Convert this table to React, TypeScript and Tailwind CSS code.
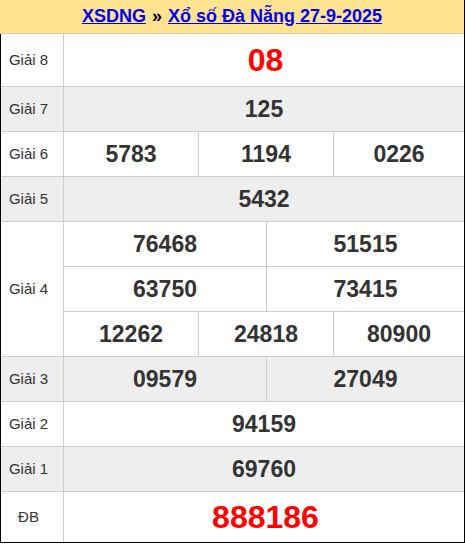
import React from "react"

type Row = {
  label: string
  lines: string[][]
  gray?: boolean
  big?: boolean
  h: string
}

const rows: Row[] = [
  { label: "Giải 8", lines: [["08"]], big: true, h: "h-[52px]" },
  { label: "Giải 7", lines: [["125"]], gray: true, h: "h-[44px]" },
  { label: "Giải 6", lines: [["5783", "1194", "0226"]], h: "h-[44px]" },
  { label: "Giải 5", lines: [["5432"]], gray: true, h: "h-[44px]" },
  {
    label: "Giải 4",
    lines: [
      ["76468", "51515"],
      ["63750", "73415"],
      ["12262", "24818", "80900"],
    ],
    h: "h-[44px]",
  },
  { label: "Giải 3", lines: [["09579", "27049"]], gray: true, h: "h-[44px]" },
  { label: "Giải 2", lines: [["94159"]], h: "h-[44px]" },
  { label: "Giải 1", lines: [["69760"]], gray: true, h: "h-[44px]" },
  { label: "ĐB", lines: [["888186"]], big: true, h: "h-[50px]" },
]

function Line({ nums, big, h, last }: { nums: string[]; big?: boolean; h: string; last: boolean }) {
  const cols =
    nums.length === 3
      ? "grid-cols-[135px_135px_1fr]"
      : nums.length === 2
        ? "grid-cols-[203px_1fr]"
        : "grid-cols-1"
  return (
    <div className={`grid ${cols} ${last ? h : "h-[45px] border-b border-[#cccccc]"}`}>
      {nums.map((n, i) => (
        <div
          key={i}
          className={`flex items-center justify-center font-bold ${
            big ? "text-[32px] text-[#ff0000] pl-[3px]" : "text-[23px] text-[#333333]"
          } ${i < nums.length - 1 ? "border-r border-[#cccccc]" : ""}`}
        >
          {n}
        </div>
      ))}
    </div>
  )
}

export default function App() {
  return (
    <div className="w-[465px] bg-white font-['Liberation_Sans',Arial,sans-serif] border-r border-black">
      <div className="h-[34px] bg-[#ffe38e] border-b border-[#cccccc] flex items-center justify-center text-[18px] font-bold pb-[1px]">
        <a href="#" className="text-[#0000ee] underline">XSDNG</a>
        <span className="text-black mx-[6px]">»</span>
        <a href="#" className="text-[#0000ee] underline">Xổ số Đà Nẵng 27-9-2025</a>
      </div>
      <div className="border-l border-b border-black">
        {rows.map((r, i) => (
          <div
            key={i}
            className={`flex ${r.gray ? "bg-[#eeeeee]" : "bg-white"} ${
              i < rows.length - 1 ? "border-b border-[#cccccc]" : ""
            }`}
          >
            <div className="w-[63px] shrink-0 border-r border-[#cccccc] flex items-center justify-center pr-[7px] text-[15px] text-[#333333]">
              {r.label}
            </div>
            <div className="flex-1 flex flex-col">
              {r.lines.map((l, j) => (
                <Line key={j} nums={l} big={r.big} h={r.h} last={j === r.lines.length - 1} />
              ))}
            </div>
          </div>
        ))}
      </div>
    </div>
  )
}
